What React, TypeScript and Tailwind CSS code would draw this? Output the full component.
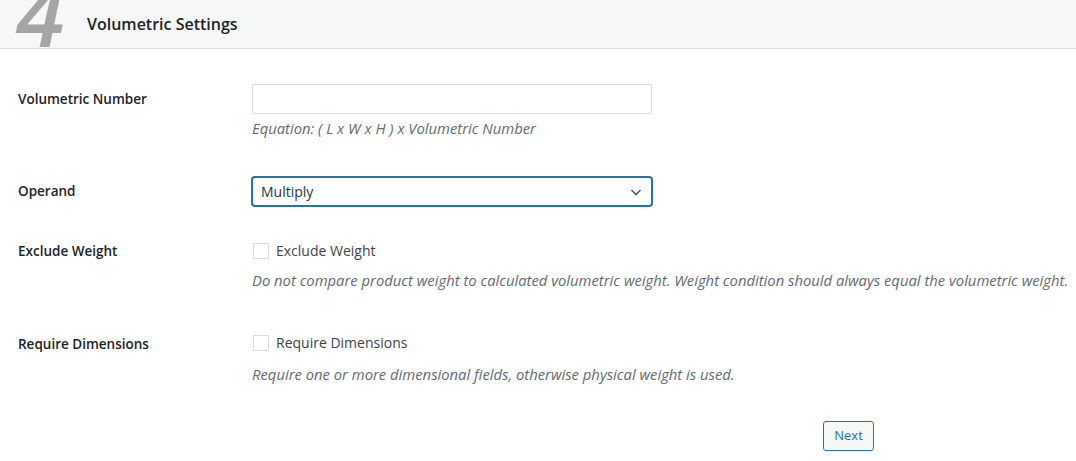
import React from "react";

const font = { fontFamily: '"Open Sans", "Noto Sans", sans-serif' };

function Label({ children }: { children: React.ReactNode }) {
  return (
    <div className="w-[252px] shrink-0 pl-[18px] pt-[21px] text-[13.5px] font-semibold leading-[18px] text-[#1d2327]">
      {children}
    </div>
  );
}

function Checkbox({ label }: { label: string }) {
  return (
    <label className="flex items-center text-[14px] text-[#3c434a] leading-[20px]">
      <span className="ml-[1px] mr-[7px] h-[16px] w-[16px] border border-[#dcdcde] bg-white" />
      {label}
    </label>
  );
}

export default function App() {
  return (
    <div className="min-h-[461px] w-[1076px] bg-white" style={font}>
      <div className="relative flex h-[49px] items-center overflow-hidden border-b border-[#dcdcde] bg-[#f6f7f7]">
        <span className="absolute left-[16px] top-[-31px] text-[88px] font-semibold italic leading-none text-[#a5a5a5]">
          4
        </span>
        <h2 className="ml-[87px] text-[16px] font-semibold text-[#1d2327]">
          Volumetric Settings
        </h2>
      </div>

      <div className="flex pt-[20px]">
        <Label>Volumetric Number</Label>
        <div className="pt-[15px]">
          <div className="h-[30px] w-[400px] rounded-[2px] border border-[#dcdcde] bg-white" />
          <p className="mt-[3px] text-[14.8px] italic leading-[22px] text-[#646970]">
            Equation: ( L x W x H ) x Volumetric Number
          </p>
        </div>
      </div>

      <div className="flex pt-[22px]">
        <Label>Operand</Label>
        <div className="pt-[15px]">
          <div className="ml-[-1px] flex h-[31px] w-[402px] items-center justify-between rounded-[4px] border-2 border-[#2271b1] bg-white pl-[8px] pr-[8px] text-[14px] text-[#2c3338]">
            <span>Multiply</span>
            <svg width="14" height="14" viewBox="0 0 14 14" fill="none">
              <path d="M2.5 5 L7 9.5 L11.5 5" stroke="#50575e" strokeWidth="1.6" />
            </svg>
          </div>
        </div>
      </div>

      <div className="flex pt-[14px]">
        <Label>Exclude Weight</Label>
        <div className="pt-[20px]">
          <Checkbox label="Exclude Weight" />
          <p className="mt-[8px] text-[14.8px] italic leading-[22px] text-[#646970]">
            Do not compare product weight to calculated volumetric weight. Weight condition should always equal the volumetric weight.
          </p>
        </div>
      </div>

      <div className="flex pt-[23px]">
        <Label>Require Dimensions</Label>
        <div className="pt-[19px]">
          <Checkbox label="Require Dimensions" />
          <p className="mt-[10px] text-[14.8px] italic leading-[22px] text-[#646970]">
            Require one or more dimensional fields, otherwise physical weight is used.
          </p>
        </div>
      </div>

      <div className="flex pt-[36px] pl-[823px]">
        <button className="h-[30px] w-[51px] rounded-[3px] border border-[#2271b1] bg-[#f6f7f7] text-[13px] text-[#2271b1]">
          Next
        </button>
      </div>
    </div>
  );
}
